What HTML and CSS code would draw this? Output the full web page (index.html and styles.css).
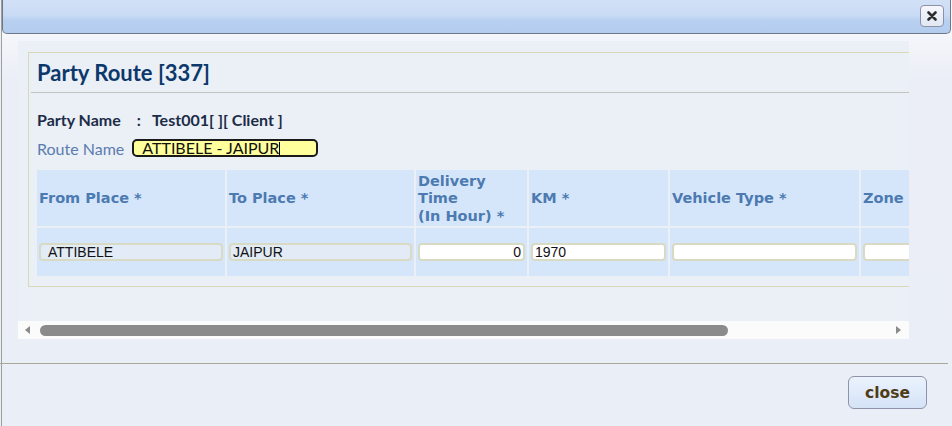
FILE: index.html
```html
<!DOCTYPE html>
<html>
<head>
<meta charset="utf-8">
<link rel="stylesheet" href="styles.css">
</head>
<body>
<div class="dialog">
  <div class="titlebar">
    <button class="x-btn" type="button" aria-label="close">
      <svg width="10" height="10" viewBox="0 0 10 10"><path d="M1.5 1.5 L8.5 8.5 M8.5 1.5 L1.5 8.5" stroke="#2e2e2e" stroke-width="2.6" stroke-linecap="round"/></svg>
    </button>
  </div>
  <div class="main">
    <div class="scrollview">
      <div class="viewport">
        <div class="fieldset">
          <div class="legend">Party Route [337]</div>
          <div class="rule"></div>
          <div class="party-row"><span class="lbl">Party Name</span><span class="colon">:</span><span>Test001[ ][ Client ]</span></div>
          <div class="route-row"><span class="route-lbl">Route Name</span><span class="route-input">ATTIBELE - JAIPUR<span class="caret"></span></span></div>
          <table class="grid">
            <colgroup>
              <col class="c1"><col class="c2"><col class="c3"><col class="c4"><col class="c5"><col class="c6">
            </colgroup>
            <tr class="head">
              <th>From Place *</th>
              <th>To Place *</th>
              <th>Delivery<br>Time<br>(In Hour) *</th>
              <th>KM *</th>
              <th>Vehicle Type *</th>
              <th>Zone <span class="star">*</span></th>
            </tr>
            <tr class="data">
              <td><span class="inp ro pad">ATTIBELE</span></td>
              <td><span class="inp ro">JAIPUR</span></td>
              <td><span class="inp num">0</span></td>
              <td><span class="inp">1970</span></td>
              <td><span class="inp"></span></td>
              <td><span class="inp"></span></td>
            </tr>
          </table>
        </div>
      </div>
      <div class="hscroll">
        <span class="arrow left"></span>
        <div class="track"><div class="thumb"></div></div>
        <span class="arrow right"></span>
      </div>
    </div>
    <div class="sep"></div>
    <div class="footer"><button class="close-btn" type="button">close</button></div>
  </div>
</div>
</body>
</html>
```
FILE: styles.css
```css
html, body {
  margin: 0;
  padding: 0;
}
body {
  width: 952px;
  height: 426px;
  overflow: hidden;
  background: #eaeef6;
  font-family: Lato, "Open Sans", sans-serif;
}
.dialog {
  margin-left: 1px;
  height: 426px;
  border-left: 1px solid #9e9e9e;
  box-sizing: border-box;
  background: linear-gradient(#f6f7fb 30px, #ebeef6 80px, #eaeef6);
}
.titlebar {
  height: 34px;
  margin-right: 1px;
  box-sizing: border-box;
  border: 1px solid #6f7886;
  border-top: none;
  border-radius: 0 0 5px 5px;
  background: linear-gradient(#d1e0f6 0%, #cadcf5 45%, #b8d0f0 62%, #b4cdef 100%);
  display: flex;
  justify-content: flex-end;
  align-items: flex-start;
  padding: 5px 6px 0 0;
}
.x-btn {
  width: 24px;
  height: 22px;
  padding: 0;
  border: 1px solid #8e90a8;
  border-radius: 4px;
  background: linear-gradient(#f5f7fc, #e1e8f4);
  display: flex;
  align-items: center;
  justify-content: center;
}
.x-btn svg { display: block; }
.main {
  padding: 7px 0 0 16px;
}
.scrollview {
  width: 891px;
}
.viewport {
  height: 280px;
  overflow: hidden;
  padding: 11px 0 0 10px;
  box-sizing: border-box;
  background: #ebeff6;
}
.fieldset {
  width: 1100px;
  border: 1px solid #d8d8ba;
  padding: 0 8px 8px 8px;
  box-sizing: border-box;
}
.legend {
  height: 39px;
  line-height: 39px;
  font-size: 22px;
  font-weight: 700;
  color: #0c386b;
}
.rule {
  margin-left: -6px;
  border-top: 1px solid #c3c3c3;
}
.party-row {
  margin-top: 17px;
  height: 20px;
  line-height: 20px;
  font-size: 16px;
  font-weight: 700;
  color: #1b2c47;
}
.party-row .colon {
  display: inline-block;
  margin: 0 11px 0 16px;
}
.route-row {
  margin-top: 8px;
  height: 20px;
  display: flex;
  align-items: center;
  font-size: 16px;
}
.route-lbl {
  color: #5a7cb0;
  margin-right: 8px;
}
.route-input {
  width: 186px;
  height: 18px;
  box-sizing: border-box;
  border: 2px solid #1a1a1a;
  border-radius: 5px;
  background: #ffff9c;
  color: #111;
  padding-left: 8px;
  line-height: 14px;
  display: flex;
  align-items: center;
}
.caret {
  display: inline-block;
  width: 1px;
  height: 13px;
  background: #000;
}
.grid {
  margin-top: 10px;
  margin-left: -2px;
  border-collapse: separate;
  border-spacing: 2px;
  table-layout: fixed;
  width: 1000px;
}
.c1 { width: 188px; }
.c2 { width: 187px; }
.c3 { width: 111px; }
.c4 { width: 139px; }
.c5 { width: 189px; }
.c6 { width: 186px; }
.grid th, .grid td {
  background: #d6e6fa;
  padding: 0 2px;
  vertical-align: middle;
  text-align: left;
}
.grid tr.head th {
  height: 56px;
  box-sizing: border-box;
  padding-top: 2px;
  font-family: "DejaVu Sans", Verdana, sans-serif;
  font-size: 14.5px;
  font-weight: 700;
  line-height: 17.5px;
  color: #4c7ab1;
}
.grid th .star { color: #e6a7b4; }
.grid tr.data td {
  height: 48px;
  box-sizing: border-box;
}
.inp {
  display: block;
  height: 18px;
  box-sizing: border-box;
  border: 2px solid #d9dac4;
  border-radius: 4px;
  background: #ffffff;
  font-family: "Liberation Sans", Arial, sans-serif;
  font-size: 14px;
  line-height: 14px;
  color: #111;
  padding: 0 2px;
  overflow: hidden;
  white-space: nowrap;
}
.inp.ro { background: #e2ebf6; }
.inp.pad { padding-left: 7px; }
.inp.num { text-align: right; }
.hscroll {
  height: 18px;
  background: #fbfbfb;
  display: flex;
  align-items: center;
  padding: 0 8px 0 7px;
  box-sizing: border-box;
}
.arrow {
  width: 0;
  height: 0;
  border-top: 4px solid transparent;
  border-bottom: 4px solid transparent;
}
.arrow.left { border-right: 5px solid #8a8a8a; }
.arrow.right { border-left: 5px solid #8a8a8a; }
.track {
  flex: 1;
  height: 11px;
  margin: 0 6px 0 10px;
}
.thumb {
  width: 688px;
  height: 11px;
  border-radius: 6px;
  background: #8b8b8b;
}
.sep {
  margin: 24px 4px 0 -18px;
  border-top: 1px solid #aaa699;
}
.footer {
  display: flex;
  justify-content: flex-end;
  padding: 12px 25px 0 0;
}
.close-btn {
  width: 79px;
  height: 33px;
  border: 1px solid #8f93aa;
  border-radius: 6px;
  background: linear-gradient(#ebf2fd, #d5e3f7);
  font-family: "DejaVu Sans", Verdana, sans-serif;
  font-size: 15.5px;
  font-weight: 700;
  color: #4e3c17;
  padding: 0;
}
```
